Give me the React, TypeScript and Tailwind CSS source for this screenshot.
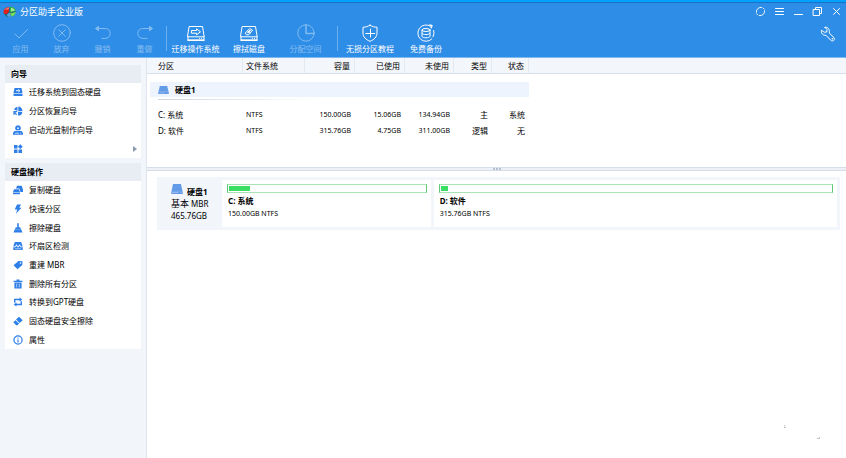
import React from "react";

type IconProps = { className?: string };

/* ---------- toolbar icons ---------- */

const line = {
  fill: "none",
  stroke: "currentColor",
  strokeWidth: 1,
  strokeLinecap: "round" as const,
  strokeLinejoin: "round" as const,
};

const CheckIcon = () => (
  <svg viewBox="0 0 18 18" className="size-[18px]" {...line}>
    <path d="M3 10l4 4 8.500-8.500" />
  </svg>
);
const DiscardIcon = () => (
  <svg viewBox="0 0 18 18" className="size-[18px]" {...line}>
    <circle cx="9" cy="9" r="8.300" />
    <path d="M5.800 5.800l6.400 6.400M12.200 5.800l-6.400 6.400" />
  </svg>
);
const UndoIcon = () => (
  <svg viewBox="0 0 18 18" className="size-[18px]" {...line}>
    <path d="M2 4.500h9.500a4.700 4.700 0 0 1 4.700 4.900a5 5 0 0 1-5 5H8" />
    <path d="M4.200 2.600L1.500 4.500l2.700 2z" fill="currentColor" />
  </svg>
);
const RedoIcon = () => (
  <svg viewBox="0 0 18 18" className="size-[18px]" {...line}>
    <path d="M15.500 4.500H6.500a4.700 4.700 0 0 0-4.700 4.900a5 5 0 0 0 5 5H11" />
    <path d="M13.800 2.600l2.700 1.900-2.700 2z" fill="currentColor" />
  </svg>
);
const DriveOutline = ({ children }: { children: React.ReactNode }) => (
  <svg viewBox="0 0 18 18" className="size-[18px]" {...line}>
    <path d="M2.500 2.500h13l1.700 10.300H0.800z" />
    <path d="M1 12.800v3.400h16v-3.400" />
    <path d="M1 16.300h16" strokeWidth="1.500" />
    <path d="M12.300 14.400h.2M14.500 14.400h.2" />
    {children}
  </svg>
);
const MigrateIcon = () => (
  <DriveOutline>
    <path d="M4.800 6.500h4.700V4.800L13.500 7.800l-4 3V9.200H4.800z" />
  </DriveOutline>
);
const WipeIcon = () => (
  <DriveOutline>
    <path d="M5.500 8.800l4.200-4.300 2.800 1.700-3.800 4.600H6.800zM7.600 6.800l2.700 2" />
    <path d="M8 8.500l2-2" strokeWidth="1.500" />
  </DriveOutline>
);
const PieIcon = () => (
  <svg viewBox="0 0 18 18" className="size-[18px]" {...line}>
    <circle cx="9" cy="9" r="8.200" />
    <path d="M9 1v8.500h8" strokeWidth="1.500" />
  </svg>
);
const ShieldIcon = () => (
  <svg viewBox="0 0 18 18" className="size-[18px]" {...line}>
    <path d="M9 1.200c2.200 1.400 4.500 2 7 2V9c0 4-3 6.700-7 8.300C5 15.700 2 13 2 9V3.200c2.500 0 4.800-.6 7-2z" />
    <path d="M9.500 5v8M4.800 9.500h8.900" />
  </svg>
);
const BackupIcon = () => (
  <svg viewBox="0 0 18 18" className="size-[18px]" {...line}>
    <path d="M13.500 2.200A8.200 8.200 0 1 0 14.800 15M16.700 6.500a8.200 8.200 0 0 1-.6 6.200" />
    <path d="M12.800 0.800l2.200.9-.9 2.200" strokeWidth="1.300" />
    <ellipse cx="9" cy="6" rx="4" ry="1.500" />
    <path d="M5 6v6.300c0 2 8 2 8 0V6M5 9.200c0 2 8 2 8 0" />
  </svg>
);

/* ---------- window icons ---------- */

const RefreshIcon = () => (
  <svg viewBox="0 0 12 12" className="size-[11px]" {...line}>
    <path d="M1.500 6.800A4.600 4.600 0 0 1 7.300 1.600M10.500 5.200A4.600 4.600 0 0 1 4.700 10.400M9 2.300l1.200 1.200M3 9.700L1.800 8.500" />
  </svg>
);
const MenuIcon = () => (
  <svg viewBox="0 0 11 11" className="size-[11px]" {...line}>
    <path d="M1.500 2.500h8M1.500 5.500h8M1.500 8.500h8" />
  </svg>
);
const MinimizeIcon = () => (
  <svg viewBox="0 0 11 11" className="size-[11px]" {...line}>
    <path d="M1.500 8.500h8" />
  </svg>
);
const RestoreIcon = () => (
  <svg viewBox="0 0 11 11" className="size-[11px]" {...line} strokeLinejoin="miter">
    <path d="M1.500 3.500h6v6h-6zM3.500 3.500v-2h6v6h-2" />
  </svg>
);
const CloseIcon = () => (
  <svg viewBox="0 0 11 11" className="size-[11px]" {...line}>
    <path d="M2.500 2.500l6 6M8.500 2.500l-6 6" />
  </svg>
);
const WrenchIcon = () => (
  <svg viewBox="0 0 16 16" className="size-4" {...line}>
    <path d="M5 1.300L7 3.500 6.700 6 4.200 6.200 1.500 4.200C.8 7 2.500 9.500 6 9.300l4.800 5c2 1.800 4.800-.6 3.200-2.700L9.200 7C10 3.500 8 .6 5 1.300z" />
    <path d="M12.300 12.700h.2" strokeWidth="1.500" />
  </svg>
);

const LogoIcon = () => (
  <svg viewBox="0 0 13 12" className="h-3 w-[13px]">
    <path d="M1 6.500C1 4.500 3.500 2 7 1.500c4 0 5.500 2 5.500 4S10 11 6.500 11 1 9 1 6.500z" fill="#1c6b7c" />
    <path d="M.5 6.300C.3 3 3 1.200 6 1v4.700L3.500 8.300C1.500 8 .6 7.500.5 6.300z" fill="#e01e1e" />
    <path d="M1.500 4C2.500 2.300 4 1.600 6 1.500v1.700z" fill="#f4786a" />
    <path d="M7 .8c3.800 0 5.700 2 5.700 4.200L7 6.500z" fill="#35b24a" />
    <path d="M8 2c2.500.2 3.700 1.300 3.800 2.600L8 5.600z" fill="#a5e69a" />
    <path d="M12.700 6c0 2.300-2 3.800-4 4.500L7 7.500z" fill="#7be04f" />
    <path d="M3.800 9l2.700-2.500 1.700 4.200C6.300 11.200 4.600 10.600 3.800 9z" fill="#58a6e8" />
  </svg>
);

/* ---------- sidebar icons ---------- */

const Solid = ({ children }: { children: React.ReactNode }) => (
  <svg viewBox="0 0 10 10" className="size-[10px] shrink-0 text-[#2f7fe8]" fill="currentColor">
    {children}
  </svg>
);
const DriveArrowIcon = () => (
  <Solid>
    <path d="M1.500 1h7l1 5H.5z" />
    <path d="M.5 6.600h9V9h-9z" />
    <path d="M3 3.700h3.500M5.300 2.300l1.500 1.400-1.500 1.400" fill="none" stroke="#fff" strokeWidth=".9" />
  </Solid>
);
const PieRecoverIcon = () => (
  <Solid>
    <path d="M4.500.8v4L1 3.800A4 4 0 0 1 4.500.8zM5.300.6A4.300 4.300 0 0 1 9.500 5H5.300zM9.400 5.700A4.300 4.300 0 0 1 5 9.600L5 5.700z" />
    <path d="M.4 5h3.800v1.200H2.300L4 8.300l-.8 1L1.500 7.200v1.700H.4z" />
  </Solid>
);
const BootDiscIcon = () => (
  <Solid>
    <path d="M5 .3a2.900 2.900 0 0 1 2 5H3A2.900 2.900 0 0 1 5 .3zm0 2a.8.8 0 1 0 0 1.700.8.8 0 0 0 0-1.700z" fillRule="evenodd" />
    <path d="M1.300 6h7.400L10 8v1.800H0V8z" />
    <path d="M2 8.200h4M7.300 8.200h1" stroke="#fff" strokeWidth=".7" />
  </Solid>
);
const GridIcon = () => (
  <Solid>
    <path d="M1 1h3.500v3.500H1zM1 5.500h3.500V9H1zM5.500 5.500H9V9H5.500zM7.300.3l2.400 2.400-2.400 2.400-2.400-2.400z" />
  </Solid>
);
const CopyDiskIcon = () => (
  <Solid>
    <path d="M4 .8h4.700l1.300 4V7H7.500L6.200 3.500H3z" />
    <path d="M1 4.200h4.800L7 7H0zM0 7.500h7v1.700H0z" />
  </Solid>
);
const BoltIcon = () => (
  <Solid>
    <path d="M4 .5h4L6.300 3.700h2.200L3 9.800l1.200-4.300H1.700z" />
  </Solid>
);
const BroomIcon = () => (
  <Solid>
    <path d="M4.200.3h1.600v4h1.300L8 6H2l.9-1.700h1.300zM1.800 6.300h6.400L9.500 9.600H.5z" />
  </Solid>
);
const BadSectorIcon = () => (
  <Solid>
    <path d="M1.800 1h6.400l1.500 4.500H8L6.700 3.200 5 5.500 3.500 3.200 2 5.500H.3z" />
    <path d="M.3 6.300h2.200l1-1.500L5 6.800l1.600-2 1 1.500h2.100V9H.3z" />
    <path d="M2 7.800h6" stroke="#fff" strokeWidth=".6" />
  </Solid>
);
const TagIcon = () => (
  <Solid>
    <path d="M5.500 1l4 .2L9.300 5 4.500 9.200.5 5.300zM7.500 2.200a.8.8 0 1 0 0 1.600.8.8 0 0 0 0-1.600z" fillRule="evenodd" />
  </Solid>
);
const TrashIcon = () => (
  <Solid>
    <path d="M3.500.5h3v1.200h3v1.200h-9V1.700h3zM1.400 3.500h7.200v6H1.400z" />
    <path d="M3.700 4.600v3.800M6.300 4.600v3.800" stroke="#fff" strokeWidth=".6" />
  </Solid>
);
const ConvertIcon = () => (
  <Solid>
    <path d="M1.700 5.800V2.500h5.800M8.300 4.200v3.300H2.500" fill="none" stroke="currentColor" strokeWidth="1.400" />
    <path d="M6.500.4l2.800 2.100-2.800 2.100zM3.500 5.400L.7 7.500l2.800 2.100z" />
  </Solid>
);
const EraserIcon = () => (
  <Solid>
    <path d="M6 .8l3.700 3.400-3 2.800L3 3.600zM2.400 4.200l3.700 3.400-1.500 1.600H3.200L.3 6.300z" />
  </Solid>
);
const InfoIcon = () => (
  <Solid>
    <circle cx="5" cy="5" r="4.100" fill="none" stroke="currentColor" strokeWidth="1.200" />
    <path d="M4.400 4.400h1.200v3.200H4.400zM4.400 2.400h1.200v1.200H4.400z" />
  </Solid>
);

const DiskIcon = ({ className }: IconProps) => (
  <svg viewBox="0 0 12 9" preserveAspectRatio="none" className={className}>
    <path d="M2 0h8l1.500 6.500H.5z" fill="#629be8" />
    <path d="M.3 6.500h11.400V9H.3z" fill="#5a94e6" />
    <path d="M1 7.800h6.500M9 7.800h.8M10.400 7.800h.7" stroke="#dce9fb" strokeWidth=".5" />
  </svg>
);

/* ---------- pieces ---------- */

type ToolProps = { label: string; icon: React.ReactNode; width: string; disabled?: boolean };

function Tool({ label, icon, width, disabled }: ToolProps) {
  return (
    <button
      type="button"
      disabled={disabled}
      className={`${width} flex shrink-0 flex-col items-center gap-0.5 whitespace-nowrap pt-1 leading-[10px] disabled:opacity-40`}
    >
      {icon}
      <span>{label}</span>
    </button>
  );
}

const Divider = () => <div className="mt-1.5 h-[25px] w-px shrink-0 bg-[#6db0f0]" />;

function WindowButton({ label, children }: { label: string; children: React.ReactNode }) {
  return (
    <button type="button" aria-label={label} className="flex w-[19px] items-center justify-center">
      {children}
    </button>
  );
}

type Item = { label: string; icon: React.ReactNode; more?: boolean };

const wizards: Item[] = [
  { label: "迁移系统到固态硬盘", icon: <DriveArrowIcon /> },
  { label: "分区恢复向导", icon: <PieRecoverIcon /> },
  { label: "启动光盘制作向导", icon: <BootDiscIcon /> },
  { label: "", icon: <GridIcon />, more: true },
];

const diskActions: Item[] = [
  { label: "复制硬盘", icon: <CopyDiskIcon /> },
  { label: "快速分区", icon: <BoltIcon /> },
  { label: "擦除硬盘", icon: <BroomIcon /> },
  { label: "坏扇区检测", icon: <BadSectorIcon /> },
  { label: "重建 MBR", icon: <TagIcon /> },
  { label: "删除所有分区", icon: <TrashIcon /> },
  { label: "转换到GPT硬盘", icon: <ConvertIcon /> },
  { label: "固态硬盘安全擦除", icon: <EraserIcon /> },
  { label: "属性", icon: <InfoIcon /> },
];

function Panel({ title, items, listClass }: { title: string; items: Item[]; listClass: string }) {
  return (
    <section className="bg-white">
      <h2 className="flex h-[18px] items-center bg-[#e8edf4] pl-1.5 font-bold">{title}</h2>
      <ul className={`grid auto-rows-fr ${listClass}`}>
        {items.map((item, i) => (
          <li key={i} className="flex">
            <button
              type="button"
              aria-label={item.label || "更多"}
              className="flex flex-1 items-center gap-1.5 whitespace-nowrap pl-2 pr-1 text-left"
            >
              {item.icon}
              <span className="flex-1">{item.label}</span>
              {item.more && (
                <svg viewBox="0 0 4 6" className="h-1.5 w-1" fill="#8d9bb0">
                  <path d="M0 0l4 3-4 3z" />
                </svg>
              )}
            </button>
          </li>
        ))}
      </ul>
    </section>
  );
}

const columns = [
  { name: "分区", cls: "w-24 pl-[11px] text-left" },
  { name: "文件系统", cls: "w-[62px] pl-[3px] text-left" },
  { name: "容量", cls: "w-[50px] pr-1 text-right" },
  { name: "已使用", cls: "w-[50px] pr-1 text-right" },
  { name: "未使用", cls: "w-[49px] pr-1 text-right" },
  { name: "类型", cls: "w-[38px] pr-1 text-right" },
  { name: "状态", cls: "w-[37px] pr-1 text-right" },
];

const rows = [
  ["C: 系统", "NTFS", "150.00GB", "15.06GB", "134.94GB", "主", "系统"],
  ["D: 软件", "NTFS", "315.76GB", "4.75GB", "311.00GB", "逻辑", "无"],
];

function Partition({ name, info, used, grow }: { name: string; info: string; used: number; grow: string }) {
  return (
    <div className={`${grow} min-w-0 bg-white pl-[5px] pr-1 pt-1`}>
      <div className="h-[9px] border border-x-[#5cc777] border-y-[#a9e2b4] p-px">
        <div className="h-full bg-[#3ade62]" style={{ width: `${used}%` }} />
      </div>
      <div className="mt-[3px] pl-px font-bold">{name}</div>
      <div className="mt-[3px] pl-px text-[7px]">{info}</div>
    </div>
  );
}

export default function App() {
  return (
    <div className="flex min-h-screen flex-col bg-white font-['Noto_Sans','Noto_Sans_CJK_SC',sans-serif] text-[8px] leading-[10px] text-black">
      <header className="border-b border-[#7fb8f0] bg-[#2e8de7] text-white">
        <div className="h-[3px] border-b border-[#1873c8] bg-[#00a2ff]" />
        <div className="flex h-[17px] pl-[3px]">
          <div className="flex flex-1 items-center gap-1">
            <LogoIcon />
            <h1 className="text-[9px]">分区助手企业版</h1>
          </div>
          <WindowButton label="刷新"><RefreshIcon /></WindowButton>
          <WindowButton label="菜单"><MenuIcon /></WindowButton>
          <WindowButton label="最小化"><MinimizeIcon /></WindowButton>
          <WindowButton label="还原"><RestoreIcon /></WindowButton>
          <WindowButton label="关闭"><CloseIcon /></WindowButton>
        </div>
        <nav className="flex h-[37px] items-start">
          <Tool label="应用" icon={<CheckIcon />} width="w-[41px]" disabled />
          <Tool label="放弃" icon={<DiscardIcon />} width="w-[41px]" disabled />
          <Tool label="撤销" icon={<UndoIcon />} width="w-[41px]" disabled />
          <Tool label="重做" icon={<RedoIcon />} width="w-[43px]" disabled />
          <Divider />
          <Tool label="迁移操作系统" icon={<MigrateIcon />} width="w-[57px]" />
          <Tool label="擦拭磁盘" icon={<WipeIcon />} width="w-[50px]" />
          <Tool label="分配空间" icon={<PieIcon />} width="w-[63px]" disabled />
          <Divider />
          <Tool label="无损分区教程" icon={<ShieldIcon />} width="w-16" />
          <Tool label="免费备份" icon={<BackupIcon />} width="w-12" />
          <button type="button" aria-label="工具" className="ml-auto pr-2.5 pt-1.5">
            <WrenchIcon />
          </button>
        </nav>
      </header>

      <div className="flex flex-1">
        <aside className="flex w-[146px] shrink-0 flex-col gap-[5px] bg-[#f2f6fb] px-[5px] pt-[7px]">
          <Panel title="向导" items={wizards} listClass="h-[75px]" />
          <Panel title="硬盘操作" items={diskActions} listClass="h-[168px]" />
        </aside>

        <main className="flex min-w-0 flex-1 flex-col border-l border-[#dfe6f1]">
          <div className="h-[109px]">
            <table className="w-full table-fixed border-separate border-spacing-0">
              <thead>
                <tr className="h-4 bg-[#f3f6fb]">
                  {columns.map((c) => (
                    <th
                      key={c.name}
                      scope="col"
                      className={`border-b border-r border-b-[#d5e0ea] border-r-[#e2e9f1] py-0 font-normal ${c.cls}`}
                    >
                      {c.name}
                    </th>
                  ))}
                  <td className="border-b border-[#d5e0ea] p-0" />
                </tr>
              </thead>
              <tbody>
                <tr>
                  <td colSpan={7} className="pb-[7px] pl-[3px] pr-0 pt-2">
                    <div className="flex h-[15px] items-center gap-1.5 bg-[#edf4fe] pl-2 font-bold">
                      <DiskIcon className="h-2 w-[11px]" />
                      硬盘1
                    </div>
                    <div className="ml-2 mt-0.5 h-px w-40 bg-linear-to-r from-[#cdd6e4] to-white" />
                  </td>
                  <td />
                </tr>
                {rows.map((r) => (
                  <tr key={r[0]} className="h-4">
                    {r.map((cell, i) => (
                      <td
                        key={i}
                        className={`py-0 ${columns[i].cls} ${i > 0 && i < 5 ? "text-[7px]" : ""}`}
                      >
                        {cell}
                      </td>
                    ))}
                    <td />
                  </tr>
                ))}
              </tbody>
            </table>
          </div>

          <div className="flex h-1 items-center justify-center gap-px border-y border-[#d6deeb] bg-[#edf1f7]">
            <span className="size-0.5 bg-[#b4bfd0]" />
            <span className="size-0.5 bg-[#b4bfd0]" />
            <span className="size-0.5 bg-[#b4bfd0]" />
          </div>

          <section className="ml-2.5 mr-1.5 mt-1.5 flex h-[53px] gap-[3px] bg-[#f2f6fb] py-[3px] pr-[3px]">
            <div className="w-[62px] shrink-0 pl-3.5 pt-1">
              <div className="flex items-end gap-1 font-bold">
                <DiskIcon className="mb-px h-[10px] w-3" />
                <span className="-mb-0.5">硬盘1</span>
              </div>
              <div className="mt-1 whitespace-nowrap">
                <span className="text-[9px]">基本</span> MBR
              </div>
              <div className="mt-0.5">465.76GB</div>
            </div>
            <Partition name="C: 系统" info="150.00GB NTFS" used={10.5} grow="flex-[199_1_0%]" />
            <Partition name="D: 软件" info="315.76GB NTFS" used={2} grow="flex-[393_1_0%]" />
          </section>

          <svg viewBox="0 0 40 14" className="mb-[19px] ml-auto mr-6 mt-auto h-3.5 w-10" fill="none" stroke="#c4c4c4">
            <path d="M2.500 0v1.500M2 2.500h2M35 13.500h3M37 12.500h1" />
          </svg>
        </main>
      </div>
    </div>
  );
}
